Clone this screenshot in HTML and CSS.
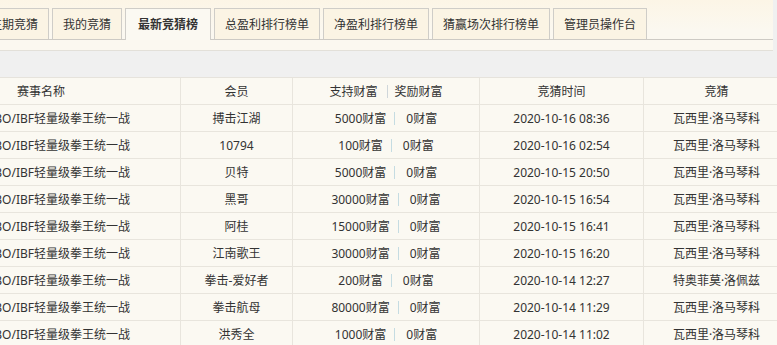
FILE: index.html
```html
<!DOCTYPE html>
<html lang="zh-CN">
<head>
    <meta charset="UTF-8">
    <title>竞猜排行榜</title>
    <link rel="stylesheet" href="styles.css">
</head>
<body>
    <div class="top">
        <ul class="tabs">
            <li class="tab">往期竞猜</li>
            <li class="tab">我的竞猜</li>
            <li class="tab active">最新竞猜榜</li>
            <li class="tab">总盈利排行榜单</li>
            <li class="tab">净盈利排行榜单</li>
            <li class="tab">猜赢场次排行榜单</li>
            <li class="tab">管理员操作台</li>
        </ul>
    </div>

    <div class="board">
        <table class="list">
            <colgroup>
                <col class="c-name">
                <col class="c-user">
                <col class="c-fund">
                <col class="c-time">
                <col class="c-pick">
            </colgroup>
            <thead>
                <tr>
                    <th>赛事名称</th>
                    <th>会员</th>
                    <th>支持财富<i class="sep head-sep"></i>奖励财富</th>
                    <th>竞猜时间</th>
                    <th>竞猜</th>
                </tr>
            </thead>
            <tbody>
                <tr><td>WBA/WBO/IBF轻量级拳王统一战</td><td>搏击江湖</td><td>5000财富<i class="sep"></i>0财富</td><td>2020-10-16 08:36</td><td>瓦西里·洛马琴科</td></tr>
                <tr><td>WBA/WBO/IBF轻量级拳王统一战</td><td>10794</td><td>100财富<i class="sep"></i>0财富</td><td>2020-10-16 02:54</td><td>瓦西里·洛马琴科</td></tr>
                <tr><td>WBA/WBO/IBF轻量级拳王统一战</td><td>贝特</td><td>5000财富<i class="sep"></i>0财富</td><td>2020-10-15 20:50</td><td>瓦西里·洛马琴科</td></tr>
                <tr><td>WBA/WBO/IBF轻量级拳王统一战</td><td>黑哥</td><td>30000财富<i class="sep"></i>0财富</td><td>2020-10-15 16:54</td><td>瓦西里·洛马琴科</td></tr>
                <tr><td>WBA/WBO/IBF轻量级拳王统一战</td><td>阿桂</td><td>15000财富<i class="sep"></i>0财富</td><td>2020-10-15 16:41</td><td>瓦西里·洛马琴科</td></tr>
                <tr><td>WBA/WBO/IBF轻量级拳王统一战</td><td>江南歌王</td><td>30000财富<i class="sep"></i>0财富</td><td>2020-10-15 16:20</td><td>瓦西里·洛马琴科</td></tr>
                <tr><td>WBA/WBO/IBF轻量级拳王统一战</td><td>拳击-爱好者</td><td>200财富<i class="sep"></i>0财富</td><td>2020-10-14 12:27</td><td>特奥菲莫·洛佩兹</td></tr>
                <tr><td>WBA/WBO/IBF轻量级拳王统一战</td><td>拳击航母</td><td>80000财富<i class="sep"></i>0财富</td><td>2020-10-14 11:29</td><td>瓦西里·洛马琴科</td></tr>
                <tr><td>WBA/WBO/IBF轻量级拳王统一战</td><td>洪秀全</td><td>1000财富<i class="sep"></i>0财富</td><td>2020-10-14 11:02</td><td>瓦西里·洛马琴科</td></tr>
                <tr><td>WBA/WBO/IBF轻量级拳王统一战</td><td>铁拳无敌</td><td>2000财富<i class="sep"></i>0财富</td><td>2020-10-14 09:15</td><td>瓦西里·洛马琴科</td></tr>
                <tr><td>WBA/WBO/IBF轻量级拳王统一战</td><td>老炮</td><td>500财富<i class="sep"></i>0财富</td><td>2020-10-13 22:40</td><td>特奥菲莫·洛佩兹</td></tr>
                <tr><td>WBA/WBO/IBF轻量级拳王统一战</td><td>左勾拳</td><td>10000财富<i class="sep"></i>0财富</td><td>2020-10-13 18:06</td><td>瓦西里·洛马琴科</td></tr>
                <tr><td>WBA/WBO/IBF轻量级拳王统一战</td><td>32561</td><td>300财富<i class="sep"></i>0财富</td><td>2020-10-13 10:52</td><td>瓦西里·洛马琴科</td></tr>
                <tr><td>WBA/WBO/IBF轻量级拳王统一战</td><td>拳迷小王</td><td>5000财富<i class="sep"></i>0财富</td><td>2020-10-12 21:33</td><td>瓦西里·洛马琴科</td></tr>
                <tr><td>WBA/WBO/IBF轻量级拳王统一战</td><td>北风</td><td>20000财富<i class="sep"></i>0财富</td><td>2020-10-12 15:19</td><td>瓦西里·洛马琴科</td></tr>
                <tr><td>WBA/WBO/IBF轻量级拳王统一战</td><td>重炮手</td><td>1000财富<i class="sep"></i>0财富</td><td>2020-10-12 08:47</td><td>特奥菲莫·洛佩兹</td></tr>
                <tr><td>WBA/WBO/IBF轻量级拳王统一战</td><td>闪电侠</td><td>3000财富<i class="sep"></i>0财富</td><td>2020-10-11 20:05</td><td>瓦西里·洛马琴科</td></tr>
            </tbody>
        </table>
    </div>
</body>
</html>
```

FILE: styles.css
```css
body {
    margin: 0;
    background: #f0f0f0;
    color: #333;
    font-family: "Noto Sans", "Noto Sans CJK SC", sans-serif;
    font-size: 12px;
    overflow: hidden;
}

.top {
    width: 773px;
    height: 50px;
    overflow: hidden;
    background: linear-gradient(to bottom, #fcf5e6, #fbf8f0 60%);
    border-bottom: 1px solid #e3e0d9;
}

.tabs {
    list-style: none;
    margin: 0 0 0 -21px;
    padding: 8px 0 0;
    display: flex;
    gap: 3px;
    width: 900px;
    border-bottom: 1px solid #cdcac4;
}

.tab {
    flex: none;
    height: 30px;
    line-height: 31px;
    padding: 0 10px;
    background: #fbf4e4;
    border: 1px solid #cfcdc8;
    border-bottom: 0;
    white-space: nowrap;
}

.tab.active {
    padding: 0 12px;
    margin-bottom: -1px;
    height: 31px;
    background: #fbf9f2;
    font-weight: bold;
}

.board {
    width: 777px;
    height: 268px;
    margin-top: 26px;
    overflow-x: hidden;
    overflow-y: scroll;
}

.board::-webkit-scrollbar {
    width: 4px;
}

.board::-webkit-scrollbar-track {
    background: #f1f0ee;
}

.board::-webkit-scrollbar-thumb {
    background: #c3c3c3;
    background-clip: padding-box;
    border-left: 1px solid transparent;
    border-top: 1px solid transparent;
}

.list {
    margin-left: -98px;
    width: 888px;
    table-layout: fixed;
    border-spacing: 0;
    background: #fbf9f2;
    border-top: 1px solid #e6e3dc;
}

.c-name { width: 279px; }
.c-user { width: 112px; }
.c-fund { width: 187px; }
.c-time { width: 164px; }
.c-pick { width: 146px; }

.list th,
.list td {
    height: 26px;
    padding: 0;
    text-align: center;
    font-weight: normal;
    white-space: nowrap;
    border-right: 1px solid #e8e5dd;
    border-bottom: 1px solid #e8e5dd;
}

.sep {
    display: inline-block;
    width: 1px;
    height: 13px;
    margin: 0 11px 0 8px;
    vertical-align: -2px;
    background: #c5dce2;
}

.head-sep {
    margin: 0 7px 0 9px;
    background: #cfd6da;
}
```
